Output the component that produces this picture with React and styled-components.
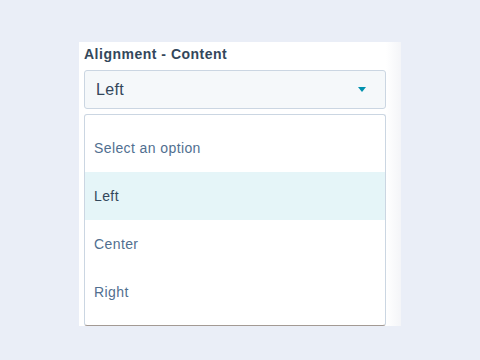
import React from "react";
import styled, { createGlobalStyle } from "styled-components";

const GlobalStyle = createGlobalStyle`
  body {
    margin: 0;
    background: #eaeef7;
    font-family: "Liberation Sans", Arial, sans-serif;
  }
`;

const Page = styled.div`
  width: 480px;
  height: 360px;
  display: flex;
  justify-content: center;
  padding-top: 42px;
  box-sizing: border-box;
`;

const Panel = styled.div`
  width: 322px;
  height: 284px;
  box-sizing: border-box;
  padding: 2px 15px 0 5px;
  overflow: hidden;
  background: linear-gradient(
    to right,
    #ffffff 0,
    #ffffff 307px,
    #f4f5f8 322px
  );
  display: flex;
  flex-direction: column;
`;

const Label = styled.div`
  font-size: 14px;
  font-weight: 700;
  line-height: 20px;
  letter-spacing: 0.5px;
  color: #33475b;
  margin-bottom: 6px;
`;

const SelectBox = styled.div`
  height: 39px;
  box-sizing: border-box;
  border: 1px solid #cbd6e2;
  border-radius: 3px;
  background: #f5f8fa;
  display: flex;
  align-items: center;
  justify-content: space-between;
  padding: 0 19px 0 11px;
  font-size: 16px;
  letter-spacing: 0.3px;
  color: #33475b;
`;

const Caret = styled.span`
  width: 0;
  height: 0;
  border-left: 4px solid transparent;
  border-right: 4px solid transparent;
  border-top: 5px solid #0091ae;
`;

const Menu = styled.div`
  margin-top: 5px;
  border: 1px solid #cbd6e2;
  border-bottom: 1px solid #a39a94;
  border-radius: 3px;
  background: #ffffff;
  padding: 9px 0 9px;
  display: flex;
  flex-direction: column;
`;

const Option = styled.div`
  height: 48px;
  display: flex;
  align-items: center;
  padding-left: 9px;
  font-size: 14px;
  letter-spacing: 0.4px;
  color: ${(p) => (p.active ? "#33475b" : "#516f90")};
  background: ${(p) => (p.active ? "#e5f5f8" : "transparent")};
`;

const options = ["Select an option", "Left", "Center", "Right"];

export default function App() {
  return (
    <>
      <GlobalStyle />
      <Page>
        <Panel>
          <Label>Alignment - Content</Label>
          <SelectBox>
            <span>Left</span>
            <Caret />
          </SelectBox>
          <Menu>
            {options.map((o) => (
              <Option key={o} active={o === "Left"}>
                {o}
              </Option>
            ))}
          </Menu>
        </Panel>
      </Page>
    </>
  );
}
